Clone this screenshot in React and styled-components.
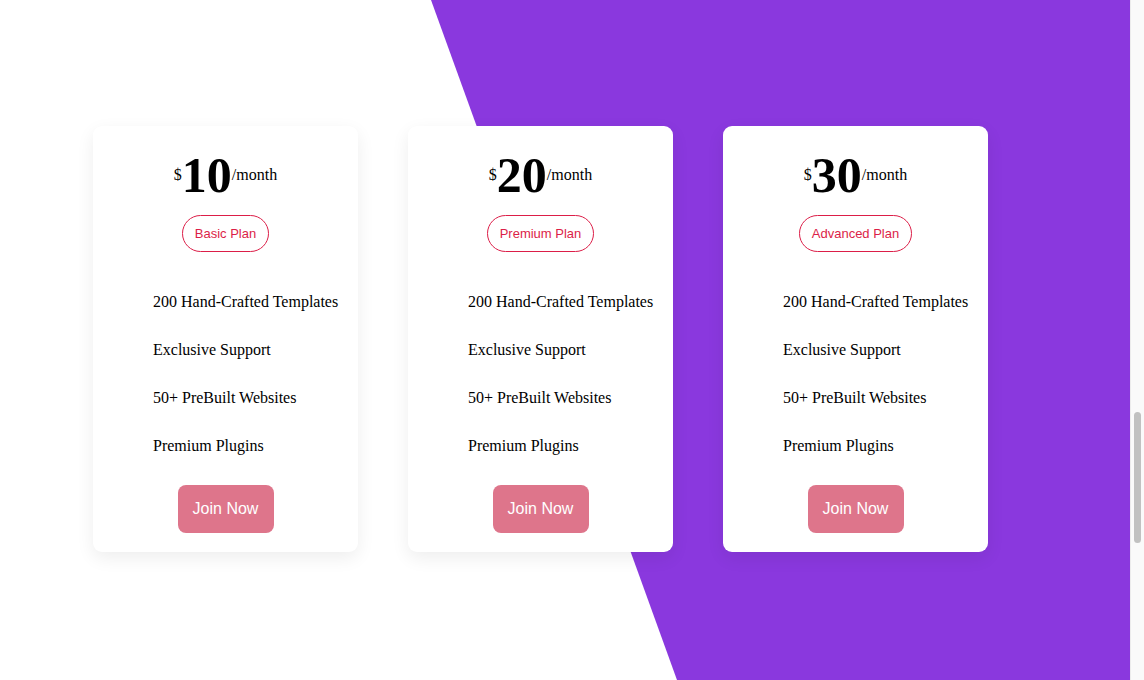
import React from "react";
import styled, { createGlobalStyle } from "styled-components";

const Global = createGlobalStyle`
  html, body { margin: 0; padding: 0; overflow: hidden; background: #fff; }
  * { box-sizing: border-box; }
`;

const Frame = styled.div`
  display: flex;
  width: 1144px;
  height: 680px;
`;

const Page = styled.main`
  position: relative;
  flex: 1;
  height: 680px;
  overflow: hidden;
  background: #fff;
  &::before {
    content: "";
    position: absolute;
    inset: 0;
    background: #8a38de;
    clip-path: polygon(431px 0, 100% 0, 100% 100%, 677px 100%);
  }
`;

const Cards = styled.div`
  position: relative;
  display: flex;
  gap: 50px;
  padding: 126px 0 0 93px;
`;

const Card = styled.div`
  width: 265px;
  height: 426px;
  background: #fff;
  border-radius: 9px;
  box-shadow: 0 6px 18px rgba(0, 0, 0, 0.07);
  display: flex;
  flex-direction: column;
  align-items: center;
  padding-top: 24px;
`;

const Price = styled.div`
  display: flex;
  align-items: center;
  font-family: "Liberation Serif", "Times New Roman", serif;
  color: #000;
  height: 50px;
`;

const Currency = styled.span`
  font-size: 16px;
  margin-top: 0px;
`;

const Amount = styled.span`
  font-size: 50px;
  font-weight: 700;
  line-height: 1;
`;

const Period = styled.span`
  font-size: 16px;
  margin-top: 0px;
`;

const Badge = styled.div`
  margin-top: 15px;
  height: 37px;
  padding: 0 12px;
  display: flex;
  align-items: center;
  border: 1px solid #dc1e48;
  border-radius: 19px;
  color: #dc1e48;
  font-family: "Liberation Sans", Arial, sans-serif;
  font-size: 13px;
`;

const Features = styled.ul`
  list-style: none;
  margin: 41px 0 0;
  padding: 0 0 0 60px;
  align-self: stretch;
  font-family: "Liberation Serif", "Times New Roman", serif;
  font-size: 16px;
  color: #000;
`;

const Feature = styled.li`
  height: 18px;
  line-height: 18px;
  & + & { margin-top: 30px; }
`;

const JoinButton = styled.button`
  margin-top: 30px;
  width: 96px;
  height: 48px;
  border: none;
  border-radius: 8px;
  background: #de758b;
  color: #fff;
  font-family: "Liberation Sans", Arial, sans-serif;
  font-size: 16px;
  cursor: pointer;
`;

const Track = styled.div`
  width: 14px;
  height: 680px;
  background: #fafafa;
  border-left: 1px solid #ececec;
  padding-top: 412px;
  display: flex;
  justify-content: center;
`;

const Thumb = styled.div`
  width: 7px;
  height: 131px;
  border-radius: 4px;
  background: #c1c1c1;
`;

const plans = [
  { price: "10", name: "Basic Plan" },
  { price: "20", name: "Premium Plan" },
  { price: "30", name: "Advanced Plan" },
];

const features = [
  "200 Hand-Crafted Templates",
  "Exclusive Support",
  "50+ PreBuilt Websites",
  "Premium Plugins",
];

export default function App() {
  return (
    <>
      <Global />
      <Frame>
        <Page>
          <Cards>
            {plans.map((p) => (
              <Card key={p.price}>
                <Price>
                  <Currency>$</Currency>
                  <Amount>{p.price}</Amount>
                  <Period>/month</Period>
                </Price>
                <Badge>{p.name}</Badge>
                <Features>
                  {features.map((f) => (
                    <Feature key={f}>{f}</Feature>
                  ))}
                </Features>
                <JoinButton>Join Now</JoinButton>
              </Card>
            ))}
          </Cards>
        </Page>
        <Track>
          <Thumb />
        </Track>
      </Frame>
    </>
  );
}
